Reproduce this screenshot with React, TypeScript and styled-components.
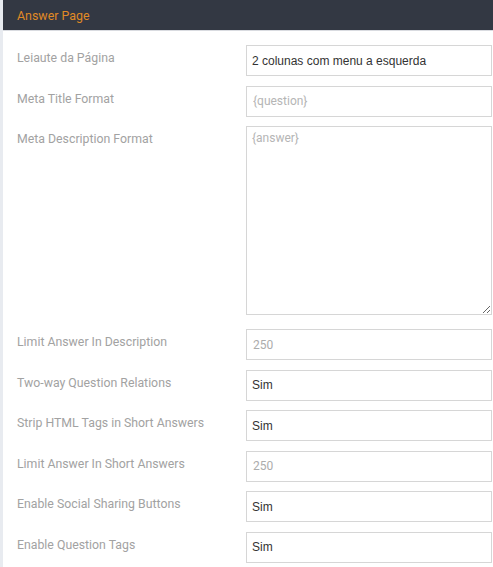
import { createGlobalStyle } from 'styled-components';
import styled from 'styled-components';

const GlobalStyle = createGlobalStyle`
  html, body {
    margin: 0;
    padding: 0;
    background: #e8ebf0;
  }
  body {
    font-family: Roboto, 'Liberation Sans', Arial, sans-serif;
  }
`;

const Page = styled.div`
  padding-left: 3px;
  min-height: 567px;
`;

const Panel = styled.section`
  background: #ffffff;
  min-height: 567px;
`;

const PanelHeader = styled.header`
  height: 30px;
  background: #333843;
  border-bottom: 1px solid #d9dbe0;
  display: flex;
  align-items: center;
  padding: 0 14px;
  font-size: 12.4px;
  color: #e08a25;
`;

const PanelBody = styled.div`
  padding: 14px 1px 0 14px;
`;

const Row = styled.div<{ $gap?: number }>`
  display: grid;
  grid-template-columns: 229px 246px;
  margin-bottom: ${(p) => p.$gap ?? 9.5}px;
`;

const Label = styled.label`
  font-size: 12.3px;
  color: #a2a2a2;
  line-height: 18px;
  padding-top: 4px;
`;

const Select = styled.select`
  box-sizing: border-box;
  width: 246px;
  height: 31px;
  border: 1px solid #d6d6d6;
  border-radius: 0;
  background: #ffffff;
  padding: 0 5px;
  font-family: 'Liberation Sans', Arial, sans-serif;
  font-size: 12px;
  color: #333333;
  appearance: none;
  outline: none;
`;

const TextInput = styled.input`
  box-sizing: border-box;
  width: 246px;
  height: 31px;
  border: 1px solid #d6d6d6;
  border-radius: 0;
  padding: 0 6px;
  font-family: Roboto, sans-serif;
  font-size: 12px;
  color: #acacac;
  outline: none;
  &::placeholder {
    color: #b5b5b5;
  }
`;

const TextArea = styled.textarea`
  box-sizing: border-box;
  display: block;
  width: 246px;
  height: 189px;
  border: 1px solid #d6d6d6;
  border-radius: 0;
  padding: 4px 5px;
  font-family: Roboto, sans-serif;
  font-size: 12px;
  outline: none;
  &::placeholder {
    color: #b5b5b5;
  }
`;

const SelectRow = ({ label, value }: { label: string; value: string }) => (
  <Row>
    <Label>{label}</Label>
    <Select defaultValue={value}>
      <option>{value}</option>
    </Select>
  </Row>
);

const InputRow = ({
  label,
  value,
  placeholder,
}: {
  label: string;
  value?: string;
  placeholder?: string;
}) => (
  <Row>
    <Label>{label}</Label>
    <TextInput defaultValue={value} placeholder={placeholder} />
  </Row>
);

export default function App() {
  return (
    <Page>
      <GlobalStyle />
      <Panel>
        <PanelHeader>Answer Page</PanelHeader>
        <PanelBody>
          <SelectRow label="Leiaute da Página" value="2 colunas com menu a esquerda" />
          <InputRow label="Meta Title Format" placeholder="{question}" />
          <Row $gap={14}>
            <Label>Meta Description Format</Label>
            <TextArea placeholder="{answer}" />
          </Row>
          <InputRow label="Limit Answer In Description" value="250" />
          <SelectRow label="Two-way Question Relations" value="Sim" />
          <SelectRow label="Strip HTML Tags in Short Answers" value="Sim" />
          <InputRow label="Limit Answer In Short Answers" value="250" />
          <SelectRow label="Enable Social Sharing Buttons" value="Sim" />
          <SelectRow label="Enable Question Tags" value="Sim" />
        </PanelBody>
      </Panel>
    </Page>
  );
}
